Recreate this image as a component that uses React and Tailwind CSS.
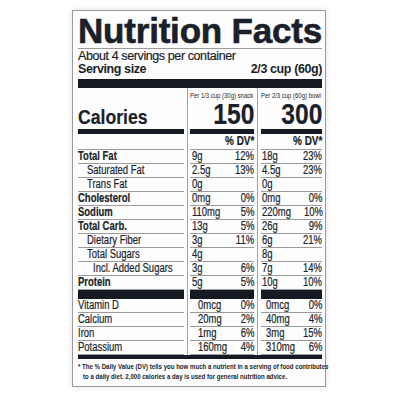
const sans = "font-['Liberation_Sans',Arial,sans-serif]";

const C0 = 'pr-[3px]';
const C1 = 'border-l border-[#a3a3a3] pl-[2px] pr-[3px]';
const C2 = 'border-l border-[#a3a3a3] pl-[3px]';
const line = 'border-b border-[#9b9b9b]';

const nutrients = [
  { label: 'Total Fat', cls: 'font-bold', a: '9g', ap: '12%', b: '18g', bp: '23%' },
  { label: 'Saturated Fat', cls: 'pl-[9px]', a: '2.5g', ap: '13%', b: '4.5g', bp: '23%' },
  { label: 'Trans Fat', cls: 'pl-[9px]', a: '0g', ap: '', b: '0g', bp: '' },
  { label: 'Cholesterol', cls: 'font-bold', a: '0mg', ap: '0%', b: '0mg', bp: '0%' },
  { label: 'Sodium', cls: 'font-bold', a: '110mg', ap: '5%', b: '220mg', bp: '10%' },
  { label: 'Total Carb.', cls: 'font-bold', a: '13g', ap: '5%', b: '26g', bp: '9%' },
  { label: 'Dietary Fiber', cls: 'pl-[9px]', a: '3g', ap: '11%', b: '6g', bp: '21%' },
  { label: 'Total Sugars', cls: 'pl-[9px]', a: '4g', ap: '', b: '8g', bp: '' },
  { label: 'Incl. Added Sugars', cls: 'pl-[15px]', a: '3g', ap: '6%', b: '7g', bp: '14%' },
  { label: 'Protein', cls: 'font-bold', a: '5g', ap: '5%', b: '10g', bp: '10%' },
];

const vitamins = [
  { label: 'Vitamin D', a: '0mcg', ap: '0%', b: '0mcg', bp: '0%' },
  { label: 'Calcium', a: '20mg', ap: '2%', b: '40mg', bp: '4%' },
  { label: 'Iron', a: '1mg', ap: '6%', b: '3mg', bp: '15%' },
  { label: 'Potassium', a: '160mg', ap: '4%', b: '310mg', bp: '6%' },
];

// condensed text: the label face is a narrow DIN, so squeeze Liberation Sans
function L({ children, className = '' }) {
  return <span className={`inline-block origin-left scale-x-[0.79] whitespace-nowrap ${className}`}>{children}</span>;
}
function R({ children, className = '' }) {
  return <span className={`inline-block origin-right scale-x-[0.79] whitespace-nowrap ${className}`}>{children}</span>;
}

function Row({ label, cls = '', a, ap, b, bp, valPad = 'pl-[2px]', valPad2 = 'pl-[1px]' }) {
  return (
    <>
      <div className={C0}>
        <div className={`h-[14px] ${line} leading-[13px] ${cls}`}><L>{label}</L></div>
      </div>
      <div className={C1}>
        <div className={`h-[14px] ${line} leading-[13px] flex justify-between ${valPad}`}>
          <L>{a}</L>
          <R>{ap}</R>
        </div>
      </div>
      <div className={C2}>
        <div className={`h-[14px] ${line} leading-[13px] flex justify-between ${valPad2}`}>
          <L>{b}</L>
          <R>{bp}</R>
        </div>
      </div>
    </>
  );
}

function Bar({ h }) {
  return (
    <>
      <div className={C0}><div className={`${h} bg-[#161a22]`} /></div>
      <div className={C1}><div className={`${h} bg-[#161a22]`} /></div>
      <div className={C2}><div className={`${h} bg-[#161a22]`} /></div>
    </>
  );
}

export default function App() {
  return (
    <div className={`w-[400px] h-[400px] bg-white pl-[72px] pt-[10px] text-[#1b1f29] ${sans}`}>
      <div className="w-[254px] border border-[#9a9a9a] bg-[#fdfdfd] pl-[5px] pr-[3px] pb-[4px] shadow-[0_0_6px_rgba(0,0,0,0.12)]">
        {/* Header */}
        <div className={`pt-[2px] ${line} font-bold text-[35px] leading-[35px] tracking-[-0.2px] whitespace-nowrap [-webkit-text-stroke:0.6px_#1b1f29]`}>
          Nutrition Facts
        </div>
        <div className="mt-[1px] text-[12.5px] leading-[13px] tracking-[-0.4px] [-webkit-text-stroke:0.2px_#1b1f29]">
          About 4 servings per container
        </div>
        <div className="flex justify-between font-bold text-[12.5px] leading-[13px] tracking-[-0.4px]">
          <span>Serving size</span>
          <span>2/3 cup (60g)</span>
        </div>
        <div className="mt-[3px] h-[9px] bg-[#161a22]" />

        {/* Table */}
        <div className="grid grid-cols-[109px_70px_65px] text-[12px] [-webkit-text-stroke:0.2px_#1b1f29]">
          <div className={`${C0} flex flex-col justify-end`}>
            <div className="font-bold text-[21px] leading-[21px] mb-[2px]"><L className="scale-x-[0.84]">Calories</L></div>
            <div className="h-[5px] bg-[#161a22]" />
          </div>
          <div className={`${C1} flex flex-col`}>
            <div className="mt-[3px] text-[7px] leading-[9px] [-webkit-text-stroke:0px]"><L className="scale-x-[0.85]">Per 1/3 cup (30g) snack</L></div>
            <div className="text-right font-bold text-[29px] leading-[28px]"><R className="scale-x-[0.85]">150</R></div>
            <div className="mt-[1px] h-[5px] bg-[#161a22]" />
          </div>
          <div className={`${C2} flex flex-col`}>
            <div className="mt-[3px] text-[7px] leading-[9px] [-webkit-text-stroke:0px]"><L className="scale-x-[0.85]">Per 2/3 cup (60g) bowl</L></div>
            <div className="text-right font-bold text-[29px] leading-[28px]"><R className="scale-x-[0.85]">300</R></div>
            <div className="mt-[1px] h-[5px] bg-[#161a22]" />
          </div>

          <div className={C0}><div className={`h-[16px] ${line}`} /></div>
          <div className={C1}><div className={`h-[16px] ${line} text-right font-bold leading-[15px]`}><R className="scale-x-[0.83]">% DV*</R></div></div>
          <div className={C2}><div className={`h-[16px] ${line} text-right font-bold leading-[15px]`}><R className="scale-x-[0.83]">% DV*</R></div></div>

          {nutrients.map((n) => (
            <Row key={n.label} {...n} />
          ))}

          <Bar h="h-[9px]" />

          {vitamins.map((n) => (
            <Row key={n.label} {...n} valPad="pl-[8px]" valPad2="pl-[5px]" />
          ))}
        </div>

        <div className="h-[4px] bg-[#161a22]" />
        <div className="mt-[3px] font-bold text-[7px] leading-[10px]">
          <div><L className="scale-x-[0.87]">* The % Daily Value (DV) tells you how much a nutrient in a serving of food contributes</L></div>
          <div className="pl-[5px]"><L className="scale-x-[0.87]">to a daily diet. 2,000 calories a day is used for general nutrition advice.</L></div>
        </div>
      </div>
    </div>
  );
}
